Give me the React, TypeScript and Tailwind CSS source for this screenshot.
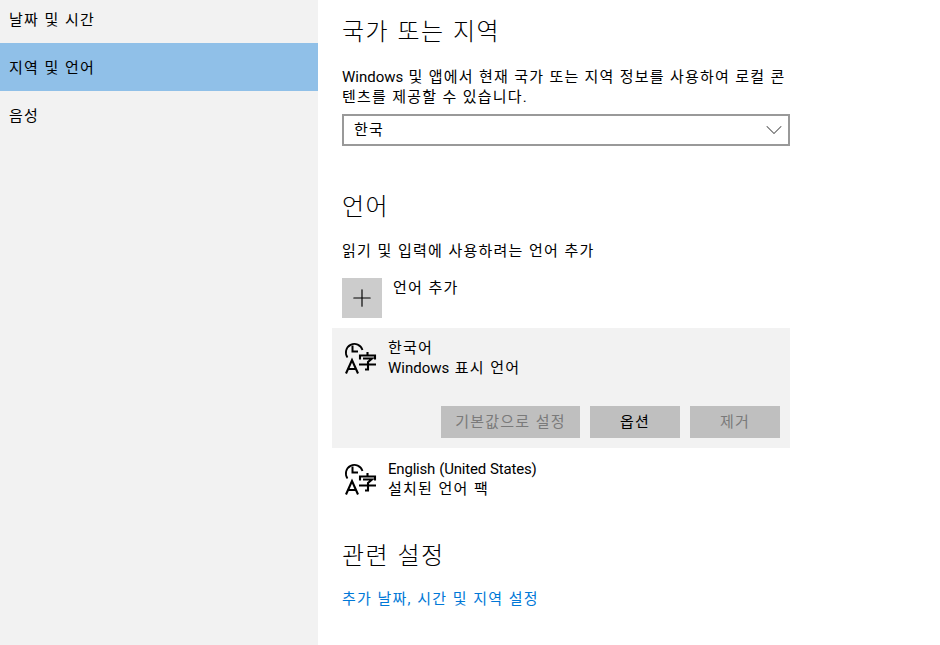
import React from 'react';
import { ChevronDown, Plus } from 'lucide-react';

const LangIcon: React.FC = () => (
  <svg width="36" height="36" viewBox="0 0 36 36" fill="none" stroke="#000" className="shrink-0">
    {/* clock */}
    <path d="M5.5 19.5A8.5 8.5 0 1 1 20.5 12" strokeWidth="1.8" />
    <path d="M10.5 7.5V13.5H16" strokeWidth="2" />
    {/* A */}
    <path d="M4 35.5L10 22L16 35.5M6 31H14" strokeWidth="2.1" />
    {/* 字 */}
    <path d="M25.5 14V17M18 21.5V17.5H33V21.5M21 20.5H30L26 24V31.5L23 31.5M17 26.5H34" strokeWidth="2.1" />
  </svg>
);

const App: React.FC = () => {
  return (
    <div
      className="flex h-[645px] w-[940px] overflow-hidden bg-white text-[15px] leading-5 tracking-[1.2px] text-black [word-spacing:0.6px]"
      style={{ fontFamily: 'Roboto, "Noto Sans CJK KR", sans-serif' }}
    >
      {/* Sidebar */}
      <aside className="w-[318px] shrink-0 bg-[#f2f2f2]">
        <div className="flex h-[43px] items-center pb-[3px] pl-[9px]">날짜 및 시간</div>
        <div className="flex h-12 items-center bg-[#90c0e8] pt-[2px] pl-[9px]">지역 및 언어</div>
        <div className="flex h-12 items-center pt-[2px] pl-[9px]">음성</div>
      </aside>

      {/* Main */}
      <main className="w-[472px] pl-[14px]">
        <div className="pl-[10px]">
          <h1 className="mt-[16px] h-8 text-2xl leading-8 font-light tracking-[1.5px] [word-spacing:1px]">국가 또는 지역</h1>
          <p className="mt-[19px] w-[448px] [word-spacing:0.3px]">
            <span className="tracking-normal">Windows</span> 및 앱에서 현재 국가 또는 지역 정보를 사용하여 로컬 콘
            <br />
            텐츠를 제공할 수 있습니다.
          </p>
          <div className="mt-[7px] flex h-8 w-[448px] items-center justify-between border-2 border-[#999999] pl-[10px]">
            <span>한국</span>
            <ChevronDown size={28} strokeWidth={0.9} className="text-[#555555]" />
          </div>

          <h2 className="mt-[45px] h-8 text-2xl leading-8 font-light tracking-[1.5px]">언어</h2>
          <p className="mt-[18px]">읽기 및 입력에 사용하려는 언어 추가</p>
          <div className="mt-[17px] flex gap-[11px]">
            <div className="flex h-10 w-10 items-center justify-center bg-[#cccccc]">
              <Plus size={28} strokeWidth={1} />
            </div>
            <span>언어 추가</span>
          </div>
        </div>

        {/* Selected language */}
        <div className="mt-[10px] h-[120px] w-[458px] bg-[#f2f2f2] pt-[10px] pl-[10px]">
          <div className="flex">
            <div className="flex w-[46px]">
              <LangIcon />
            </div>
            <div>
              <div>한국어</div>
              <div>
                <span className="tracking-normal">Windows</span> 표시 언어
              </div>
            </div>
          </div>
          <div className="mt-[28px] flex justify-end gap-[10px] pr-[10px]">
            <div className="flex h-8 w-[139px] items-center justify-center bg-[#bfbfbf] text-[#7a7a7a]">기본값으로 설정</div>
            <div className="flex h-8 w-[90px] items-center justify-center bg-[#bfbfbf]">옵션</div>
            <div className="flex h-8 w-[90px] items-center justify-center bg-[#bfbfbf] text-[#7a7a7a]">제거</div>
          </div>
        </div>

        <div className="mt-[11px] flex pl-[10px]">
          <div className="flex w-[46px]">
            <LangIcon />
          </div>
          <div>
            <div className="tracking-[-0.2px]">English (United States)</div>
            <div>설치된 언어 팩</div>
          </div>
        </div>

        <div className="pl-[10px]">
          <h2 className="mt-[41px] h-8 text-2xl leading-8 font-light tracking-[1.5px] [word-spacing:1px]">관련 설정</h2>
          <a className="mt-[17px] block text-[#0078d7]">추가 날짜, 시간 및 지역 설정</a>
        </div>
      </main>
    </div>
  );
};

export default App;
